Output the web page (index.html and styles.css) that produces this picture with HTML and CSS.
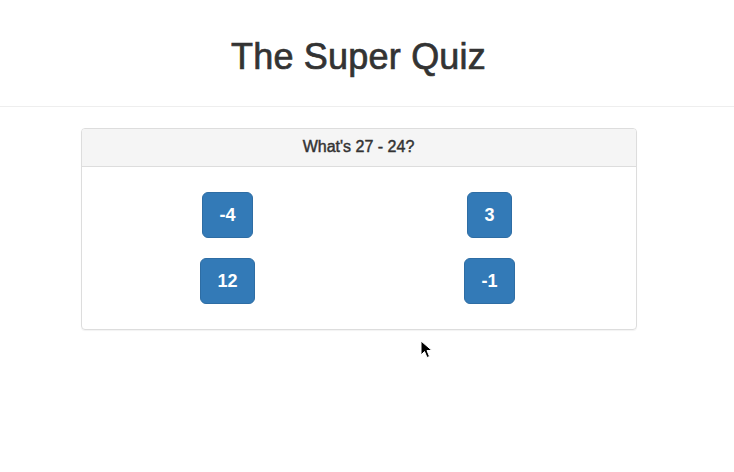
FILE: index.html
```html
<!DOCTYPE html>
<html>
<head>
<meta charset="utf-8">
<link rel="stylesheet" href="styles.css">
</head>
<body>
<header class="page-header">
  <h1 class="title">The Super Quiz</h1>
</header>
<main class="container">
  <section class="panel">
    <div class="panel-heading">What's 27 - 24?</div>
    <div class="panel-body">
      <div class="col"><button class="btn">-4</button></div>
      <div class="col"><button class="btn">3</button></div>
      <div class="col"><button class="btn">12</button></div>
      <div class="col"><button class="btn">-1</button></div>
    </div>
  </section>
</main>
<svg class="cursor" width="14" height="20" viewBox="0 0 14 20">
  <path d="M1 1 L1 15 L4.5 11.5 L7 17.5 L9.5 16.5 L7 10.5 L12 10.5 Z" fill="#000" stroke="#fff" stroke-width="1"/>
</svg>
</body>
</html>
```
FILE: styles.css
```css
html {
  margin: 0;
  padding: 0;
  background: #fff;
  overflow: hidden;
}
body {
  margin: 0;
  padding: 0;
  font-family: "Liberation Sans", Arial, sans-serif;
  color: #333;
  position: relative;
  height: 472px;
}
.page-header {
  border-bottom: 1px solid #eee;
  padding: 0 17px 9px 0;
  margin: 0;
}
.title {
  margin: 0;
  padding-top: 37px;
  font-size: 36px;
  font-weight: 500;
  line-height: 40px;
  letter-spacing: 0.2px;
  -webkit-text-stroke: 0.7px #333;
  text-align: center;
  color: #333;
  height: 60px;
}
.container {
  display: flex;
  justify-content: center;
  padding: 21px 17px 0 0;
}
.panel {
  width: 554px;
  border: 1px solid #ddd;
  border-radius: 4px;
  box-shadow: 0 1px 1px rgba(0,0,0,0.05);
}
.panel-heading {
  background: #f5f5f5;
  border-bottom: 1px solid #ddd;
  border-radius: 3px 3px 0 0;
  text-align: center;
  font-size: 16px;
  line-height: 20px;
  -webkit-text-stroke: 0.45px #333;
  padding: 8px 15px 9px;
}
.panel-body {
  padding: 15px;
  display: grid;
  grid-template-columns: 1fr 1fr;
}
.col {
  display: flex;
  justify-content: center;
  padding: 10px 0;
}
.btn {
  font-family: "Liberation Sans", Arial, sans-serif;
  font-size: 18px;
  font-weight: bold;
  line-height: 24px;
  padding: 10px 16px;
  color: #fff;
  background: #337ab7;
  border: 1px solid #2e6da4;
  border-radius: 6px;
}
.cursor {
  position: absolute;
  left: 420px;
  top: 340px;
}
```
